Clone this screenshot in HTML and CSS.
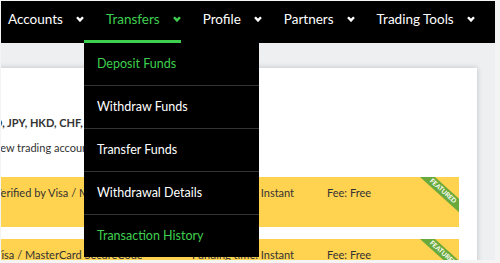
FILE: index.html
```html
<!DOCTYPE html>
<html lang="en">
<head>
    <meta charset="UTF-8">
    <meta name="viewport" content="width=device-width, initial-scale=1.0">
    <title>Deposit Funds</title>
    <link rel="stylesheet" href="styles.css">
</head>
<body>
    <div class="page">
        <nav class="topnav">
            <ul class="menu">
                <li class="menu-item">Accounts
                    <svg class="chev" viewBox="0 0 8 6"><polyline points="1,1.2 4,4.4 7,1.2"/></svg>
                </li>
                <li class="menu-item active">Transfers
                    <svg class="chev" viewBox="0 0 8 6"><polyline points="1,1.2 4,4.4 7,1.2"/></svg>
                    <ul class="dropdown">
                        <li class="drop-item current">Deposit Funds</li>
                        <li class="drop-item">Withdraw Funds</li>
                        <li class="drop-item">Transfer Funds</li>
                        <li class="drop-item">Withdrawal Details</li>
                        <li class="drop-item current">Transaction History</li>
                    </ul>
                </li>
                <li class="menu-item">Profile
                    <svg class="chev" viewBox="0 0 8 6"><polyline points="1,1.2 4,4.4 7,1.2"/></svg>
                </li>
                <li class="menu-item">Partners
                    <svg class="chev" viewBox="0 0 8 6"><polyline points="1,1.2 4,4.4 7,1.2"/></svg>
                </li>
                <li class="menu-item">Trading Tools
                    <svg class="chev" viewBox="0 0 8 6"><polyline points="1,1.2 4,4.4 7,1.2"/></svg>
                </li>
            </ul>
        </nav>

        <div class="main">
            <div class="card">
                <p class="currencies">D, JPY, HKD, CHF, CAD, SGD</p>
                <p class="note">new trading account in the currency of your choice.</p>

                <div class="method">
                    <span>Verified by Visa / MasterCard SecureCode</span>
                    <span>Funding time: Instant</span>
                    <span>Fee: Free</span>
                    <div class="ribbon">FEATURED</div>
                </div>
                <div class="method">
                    <span>Visa / MasterCard SecureCode</span>
                    <span>Funding time: Instant</span>
                    <span>Fee: Free</span>
                    <div class="ribbon">FEATURED</div>
                </div>
            </div>
        </div>
    </div>
</body>
</html>
```

FILE: styles.css
```css
body {
    margin: 0;
    padding: 0;
    background-color: #f4f4f4;
    font-family: Lato, "Open Sans", Arial, sans-serif;
}

.page {
    margin: 1px 0 0 1px;
    width: 494px;
    height: 259px;
    overflow: hidden;
    background-color: #eeeff0;
}

.topnav {
    background-color: #000000;
    height: 42px;
    position: relative;
    z-index: 2;
}

.menu {
    list-style: none;
    margin: 0 0 0 -15px;
    padding: 0;
    display: flex;
}

.menu-item {
    position: relative;
    box-sizing: border-box;
    height: 42px;
    display: flex;
    align-items: center;
    padding: 0 0 4px 22px;
    border-bottom: 3px solid transparent;
    color: #ffffff;
    font-size: 13.5px;
    white-space: nowrap;
}

.menu-item.active {
    color: #3ecf4e;
    border-bottom-color: #3ecf4e;
}

.chev {
    width: 8px;
    height: 6px;
    margin-left: 13px;
    fill: none;
    stroke: currentColor;
    stroke-width: 2.4;
}

.dropdown {
    list-style: none;
    margin: 0;
    padding: 0;
    position: absolute;
    top: 42px;
    left: 0;
    width: 175px;
    background-color: #000000;
}

.drop-item {
    height: 42px;
    line-height: 42px;
    padding-left: 13px;
    color: #ffffff;
    font-size: 12.5px;
    border-top: 1px solid #333333;
}

.drop-item:first-child {
    border-top: none;
}

.drop-item.current {
    color: #3ecf4e;
}

.main {
    padding-top: 25px;
}

.card {
    background-color: #ffffff;
    margin: 0 18px 0 -20px;
    padding: 47px 18px 20px 0;
    box-shadow: 0 0 6px rgba(0, 0, 0, 0.2);
    color: #333333;
    font-size: 11px;
}

.card p {
    margin: 0;
    padding-left: 13px;
    line-height: 16px;
    white-space: nowrap;
}

.currencies {
    font-weight: bold;
}

.note {
    margin-top: 9px !important;
}

.method {
    position: relative;
    overflow: hidden;
    margin-top: 21px;
    height: 50px;
    box-sizing: border-box;
    padding: 8px 0 0 13px;
    background-color: #ffd24f;
    display: grid;
    grid-template-columns: 198px 135px 1fr;
    align-items: start;
    line-height: 16px;
    white-space: nowrap;
}

.method + .method {
    margin-top: 12px;
}

.ribbon {
    position: absolute;
    top: 9px;
    right: -12px;
    width: 56px;
    height: 10px;
    line-height: 10px;
    background-color: #6aaa3c;
    color: #ffffff;
    font-size: 6.5px;
    font-weight: bold;
    text-align: center;
    transform: rotate(42deg);
}
```
